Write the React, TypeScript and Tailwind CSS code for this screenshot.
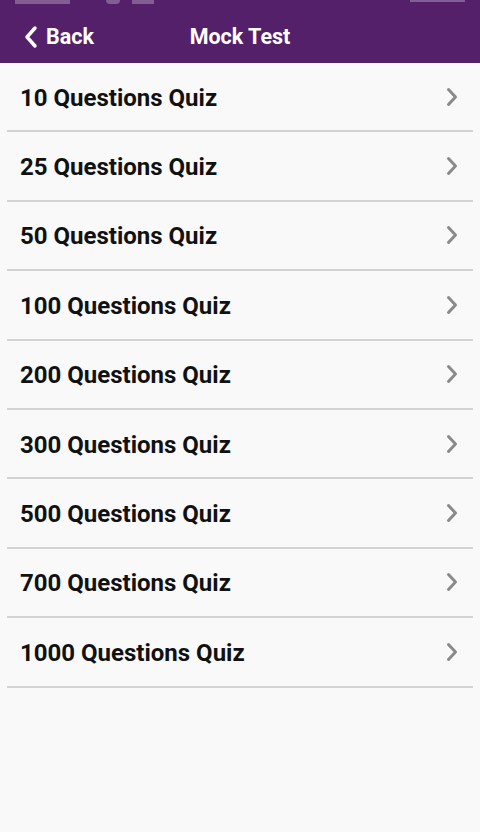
import React from 'react';

const QUIZZES = [10, 25, 50, 100, 200, 300, 500, 700, 1000];

const Chevron: React.FC<{ className?: string }> = ({ className }) => (
  <svg viewBox="0 0 12 20" className={className} fill="none" stroke="currentColor" strokeWidth="3" strokeLinecap="round" strokeLinejoin="round">
    <path d="M2.5 2.5 L9.5 10 L2.5 17.5" />
  </svg>
);

const App: React.FC = () => {
  return (
    <div className="w-[480px] h-[832px] bg-[#f9f9f9] overflow-hidden" style={{ fontFamily: 'Roboto, "Liberation Sans", sans-serif' }}>
      {/* header */}
      <div className="relative h-[63px] bg-[#54206a] flex items-center">
        <div className="absolute top-0 left-0 right-0 h-[5px] flex items-start gap-3 px-[15px] opacity-50">
          <div className="w-[55px] h-[4px] bg-[#b39abf]" />
          <div className="ml-[24px] w-[14px] h-[4px] rounded-b-full bg-[#b39abf]" />
          <div className="w-[22px] h-[4px] bg-[#b39abf]" />
          <div className="ml-auto w-[55px] h-[2px] bg-[#b39abf]" />
        </div>
        <div className="flex items-center pl-[24px] pt-[11px] text-white">
          <svg viewBox="0 0 14 24" className="w-[14px] h-[24px] text-white" fill="none" stroke="currentColor" strokeWidth="3.5" strokeLinecap="round" strokeLinejoin="round">
            <path d="M11 3 L3 12 L11 21" />
          </svg>
          <span className="ml-[8px] text-[21.5px] font-bold">Back</span>
        </div>
        <div className="absolute left-0 right-0 top-[11px] h-[52px] flex items-center justify-center pointer-events-none">
          <span className="text-[21.5px] font-bold text-white">Mock Test</span>
        </div>
      </div>

      {/* list */}
      <div className="flex flex-col">
        {QUIZZES.map(n => (
          <div key={n} className="flex flex-col">
            <div className="h-[67.4px] flex items-center justify-between pl-[20px] pr-[22px]">
              <span className="text-[24px] font-bold text-[#111111] pt-[2px]">{n} Questions Quiz</span>
              <Chevron className="w-[12px] h-[20px] text-[#8a8a8a]" />
            </div>
            <div className="mx-[7px] h-[2px] bg-[#d2d2d2]" />
          </div>
        ))}
      </div>
    </div>
  );
};

export default App;
